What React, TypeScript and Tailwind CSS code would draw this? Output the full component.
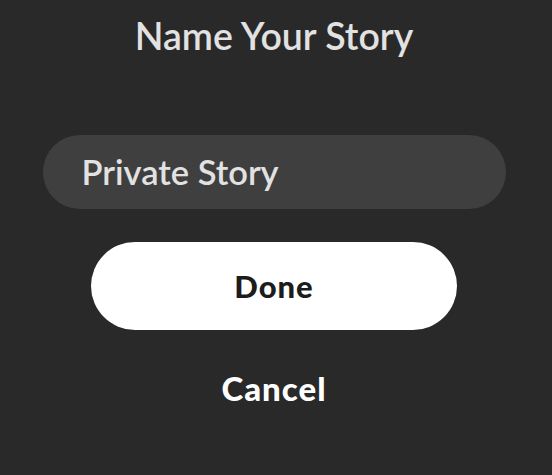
export default function App() {
  return (
    <div
      className="flex h-[475px] w-[552px] flex-col items-center bg-[#292929] pr-[4px]"
      style={{ fontFamily: "Lato, 'Noto Sans', sans-serif" }}
    >
      <h1 className="mt-[13px] h-[46px] text-[37.5px] leading-[46px] font-semibold text-[#e2e2e2]">
        Name Your Story
      </h1>

      <div className="mt-[76px] flex h-[74px] w-[463px] items-center rounded-full bg-[#3f3f3f] px-[39px]">
        <span className="text-[34.5px] font-semibold text-[#e2e2e2]">Private Story</span>
      </div>

      <button className="mt-[33px] flex h-[88px] w-[366px] items-center justify-center rounded-full bg-white">
        <span className="text-[31px] font-black tracking-[1px] text-[#1c1c1c]">Done</span>
      </button>

      <button className="mt-[42px] text-[33px] leading-[33px] font-black tracking-[1px] text-white">
        Cancel
      </button>
    </div>
  );
}
